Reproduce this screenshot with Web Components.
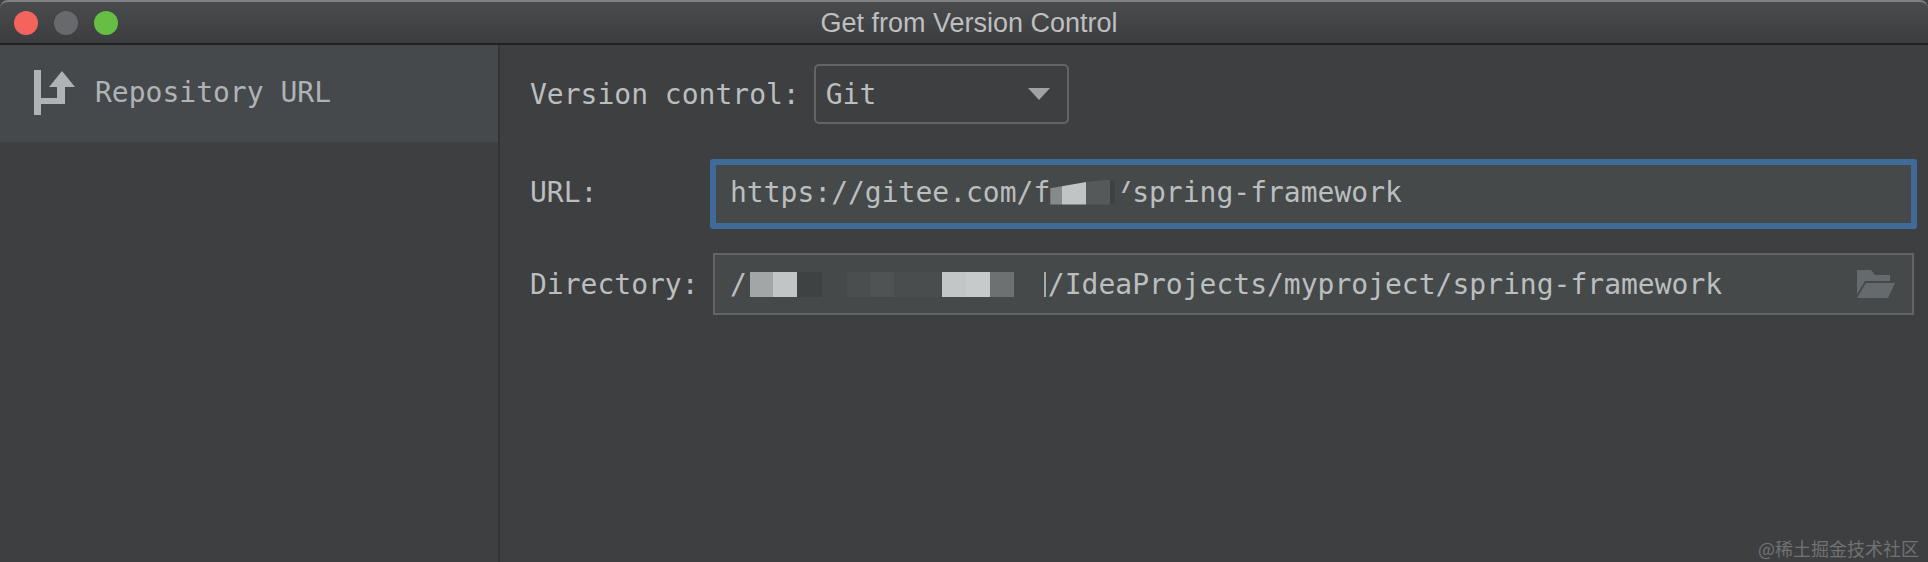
<!DOCTYPE html>
<html>
<head>
<meta charset="utf-8">
<title>Get from Version Control</title>
<style>
    html, body {
        margin: 0;
        padding: 0;
        height: 100%;
        background: rgb(62, 63, 65);
    }
</style>
</head>
<body>
<vcs-dialog>
    <dialog-titlebar slot="top">Get from Version Control</dialog-titlebar>
    <side-item slot="side">Repository URL</side-item>

    <form-row label="Version control:" top="0" gap="14">
        <combo-box>Git</combo-box>
    </form-row>
    <form-row label="URL:" top="35" gap="0" lift="4">
        <text-field focused>https://gitee.com/f<mosaic-blur cells="87:12,c1:24,56:24,3f:5" hide="13" clip="polygon(0 35%, 36px 10%, 60px 0, 100% 0, 100% 100%, 0 100%)"></mosaic-blur>/spring-framework</text-field>
    </form-row>
    <form-row label="Directory:" top="24" gap="0">
        <text-field folder>/<mosaic-blur cells="46:3,a3:23,c2:24,3f:25,46:25,4b:23,50:24,4a:48,c3:24,c7:24,6e:24,46:30,a8:2,46:2"></mosaic-blur>/IdeaProjects/myproject/spring-framework</text-field>
    </form-row>

    <span slot="mark">@稀土掘金技术社区</span>
</vcs-dialog>

<script>
class VcsDialog extends HTMLElement {
    constructor() {
        super();
        this.attachShadow({mode: "open"}).innerHTML = `
        <style>
            :host {
                display: flex;
                flex-direction: column;
                height: 562px;
                overflow: hidden;
                position: relative;
                background: rgb(62, 63, 65);
                color: rgb(187, 190, 191);
                font-family: "DejaVu Sans Mono", "Liberation Mono", monospace;
                font-size: 28px;
            }
            .body {
                flex: 1;
                display: flex;
            }
            .side {
                width: 498px;
                flex: none;
                border-right: 2px solid rgb(51, 52, 54);
            }
            .main {
                flex: 1;
                display: flex;
                flex-direction: column;
                padding: 19px 11px 0 30px;
            }
            .mark {
                position: absolute;
                right: 9px;
                bottom: 1px;
                font: 18px "Noto Sans CJK SC", sans-serif;
                color: rgb(112, 114, 116);
            }
        </style>
        <slot name="top"></slot>
        <div class="body">
            <div class="side"><slot name="side"></slot></div>
            <div class="main"><slot></slot></div>
        </div>
        <div class="mark"><slot name="mark"></slot></div>`;
    }
}

class DialogTitlebar extends HTMLElement {
    constructor() {
        super();
        this.attachShadow({mode: "open"}).innerHTML = `
        <style>
            :host {
                display: flex;
                align-items: center;
                flex: none;
                position: relative;
                background: linear-gradient(to bottom, rgb(74, 75, 77), rgb(60, 61, 63));
                border-top: 2px solid rgb(128, 129, 130);
                border-bottom: 2px solid rgb(32, 33, 34);
                box-sizing: border-box;
                height: 45px;
                border-radius: 8px 8px 0 0;
            }
            .lights {
                display: flex;
                gap: 16px;
                padding-left: 14px;
            }
            .lights i {
                width: 24px;
                height: 24px;
                border-radius: 50%;
            }
            .title {
                position: absolute;
                left: 0;
                right: 0;
                top: 6px;
                text-align: center;
                font: 27px "Liberation Sans", Arial, sans-serif;
                color: rgb(190, 191, 192);
                padding-left: 10px;
            }
        </style>
        <div class="lights">
            <i style="background: rgb(244, 100, 92)"></i>
            <i style="background: rgb(104, 105, 108)"></i>
            <i style="background: rgb(103, 190, 68)"></i>
        </div>
        <div class="title"><slot></slot></div>`;
    }
}

class SideItem extends HTMLElement {
    constructor() {
        super();
        this.attachShadow({mode: "open"}).innerHTML = `
        <style>
            :host {
                display: flex;
                align-items: center;
                gap: 20px;
                height: 97px;
                padding: 0 0 3px 34px;
                box-sizing: border-box;
                background: rgb(70, 73, 75);
                color: rgb(175, 179, 181);
            }
            svg { display: block; }
        </style>
        <svg width="41" height="45" viewBox="0 0 41 45">
            <path fill="rgb(175,179,181)" d="M0 0h7v45H0zM7 28h16V17h-8L28 1l13 16H31v17H7z"/>
        </svg>
        <span><slot></slot></span>`;
    }
}

class FormRow extends HTMLElement {
    constructor() {
        super();
        const gap = this.getAttribute("gap") || 0;
        const top = this.getAttribute("top") || 0;
        const lift = this.getAttribute("lift") || 0;
        this.attachShadow({mode: "open"}).innerHTML = `
        <style>
            :host {
                display: flex;
                align-items: center;
                margin-top: ${top}px;
            }
            .label {
                min-width: 183px;
                margin-right: ${gap}px;
                margin-bottom: ${lift}px;
                flex: none;
                color: rgb(187, 190, 191);
            }
            .field {
                flex: 1;
                min-width: 0;
                display: flex;
            }
        </style>
        <span class="label">${this.getAttribute("label")}</span>
        <div class="field"><slot></slot></div>`;
    }
}

class ComboBox extends HTMLElement {
    constructor() {
        super();
        this.attachShadow({mode: "open"}).innerHTML = `
        <style>
            :host {
                display: flex;
                align-items: center;
                justify-content: space-between;
                width: 255px;
                height: 60px;
                box-sizing: border-box;
                padding: 0 17px 0 10px;
                border: 2px solid rgb(98, 101, 104);
                border-radius: 5px;
            }
            svg { display: block; }
        </style>
        <span><slot></slot></span>
        <svg width="22" height="12" viewBox="0 0 22 12"><path fill="rgb(160,163,165)" d="M0 0h22L11 12z"/></svg>`;
    }
}

class TextField extends HTMLElement {
    constructor() {
        super();
        const folder = this.hasAttribute("folder") ? `
        <svg width="38" height="28" viewBox="0 0 38 28">
            <path fill="rgb(101,106,108)" d="M0 0h14l4 5h15v6H8L0 24z"/>
            <path fill="rgb(101,106,108)" d="M9 13h29l-7 15H0z"/>
        </svg>` : "";
        this.attachShadow({mode: "open"}).innerHTML = `
        <style>
            :host {
                flex: 1;
                display: flex;
                align-items: center;
                justify-content: space-between;
                height: 62px;
                box-sizing: border-box;
                margin-right: 3px;
                padding: 0 17px 0 15px;
                border: 2px solid rgb(98, 101, 104);
                background: rgb(70, 73, 74);
                white-space: pre;
            }
            :host([focused]) {
                height: 70px;
                margin: 0 0 0 -3px;
                border: 6px solid rgb(64, 106, 152);
                padding-left: 14px;
                padding-bottom: 4px;
                border-radius: 3px;
            }
            .text {
                display: flex;
                align-items: center;
            }
            svg { display: block; }
        </style>
        <span class="text"><slot></slot></span>${folder}`;
    }
}

// stands in for the pixelated part of the screenshot, cells are "grey:width"
class MosaicBlur extends HTMLElement {
    constructor() {
        super();
        const cells = this.getAttribute("cells").split(",").map(c => {
            const [grey, width] = c.split(":");
            const v = parseInt(grey, 16);
            return `<i style="width: ${width}px; background: rgb(${v}, ${v + 3}, ${v + 4})"></i>`;
        }).join("");
        const hide = this.getAttribute("hide");
        this.attachShadow({mode: "open"}).innerHTML = `
        <style>
            :host {
                display: inline-flex;
                position: relative;
                height: 25px;
                flex: none;
                filter: blur(0.6px);
            }
            .cells {
                display: flex;
                clip-path: ${this.getAttribute("clip") || "none"};
            }
            i { display: block; height: 25px; }
            .hide {
                position: absolute;
                top: 13px;
                right: -${hide || 0}px;
                width: ${hide || 0}px;
                height: 22px;
                background: rgb(70, 73, 74);
            }
        </style>
        <div class="cells">${cells}</div>
        ${hide ? `<div class="hide"></div>` : ""}`;
    }
}

customElements.define("vcs-dialog", VcsDialog);
customElements.define("dialog-titlebar", DialogTitlebar);
customElements.define("side-item", SideItem);
customElements.define("form-row", FormRow);
customElements.define("combo-box", ComboBox);
customElements.define("text-field", TextField);
customElements.define("mosaic-blur", MosaicBlur);
</script>
</body>
</html>
